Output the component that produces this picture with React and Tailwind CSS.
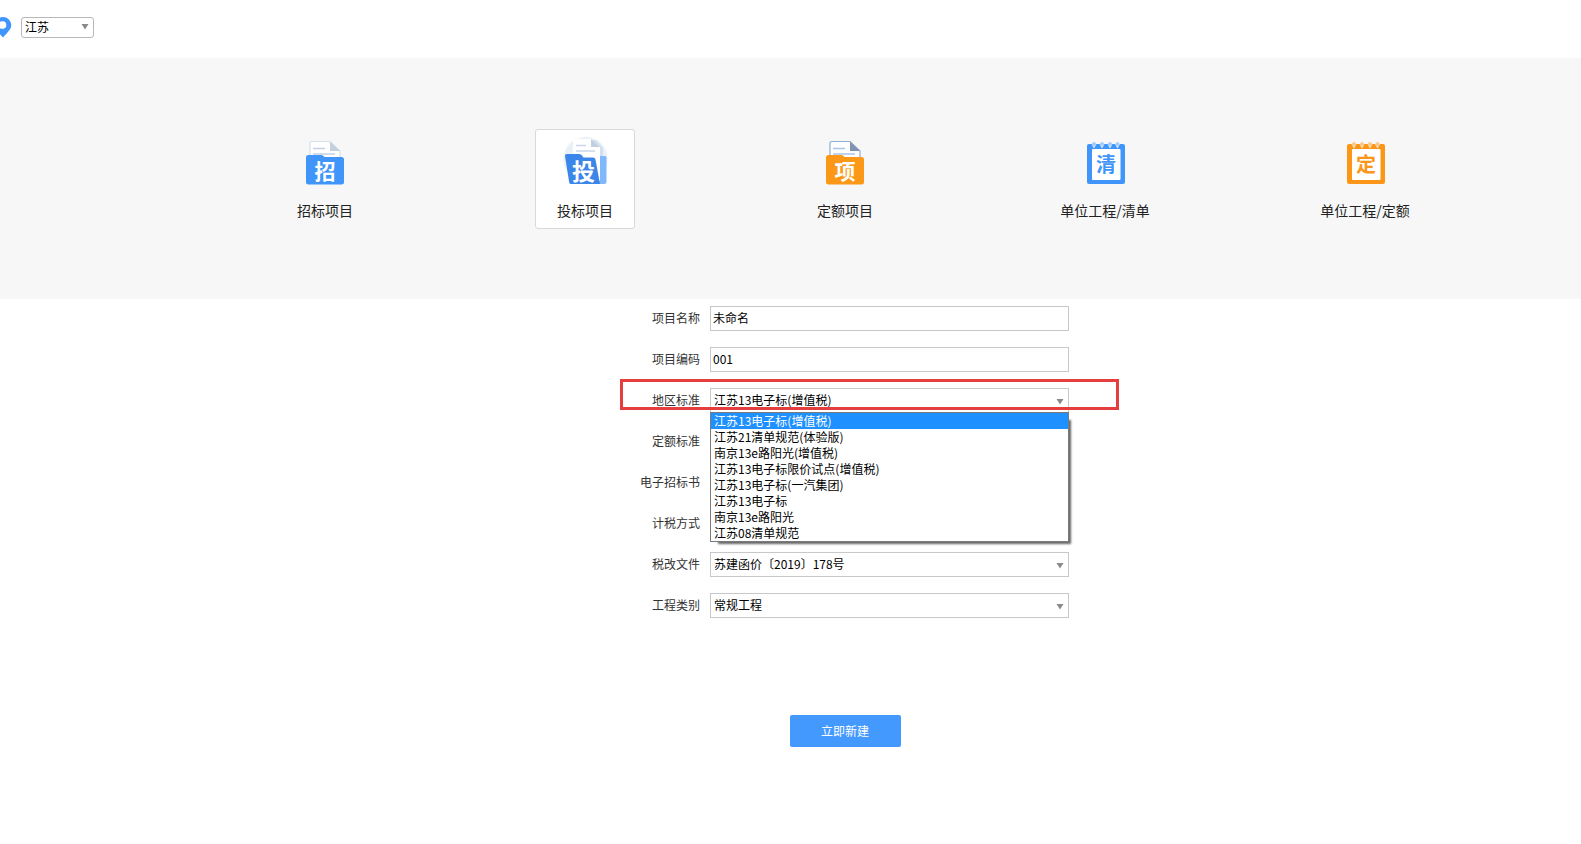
import React, { useState } from 'react';
import clsx from 'clsx';

const tabs = [
    { id: 'zhao', label: '招标项目', icon: <FolderIcon char="招" color="#4095fb" edge="#d5e0ef" fold="#c3d0e0" line="#c5d0e6" /> },
    { id: 'tou', label: '投标项目', icon: <OpenFolderIcon char="投" /> },
    { id: 'xiang', label: '定额项目', icon: <FolderIcon char="项" color="#fc9817" edge="#8fadd0" fold="#8093b0" line="#aac4ec" /> },
    { id: 'qing', label: '单位工程/清单', icon: <NotepadIcon char="清" color="#4095fb" ring="#a9cdfa" /> },
    { id: 'ding', label: '单位工程/定额', icon: <NotepadIcon char="定" color="#fb9619" ring="#fbc98b" /> },
];

const standards = [
    '江苏13电子标(增值税)',
    '江苏21清单规范(体验版)',
    '南京13e路阳光(增值税)',
    '江苏13电子标限价试点(增值税)',
    '江苏13电子标(一汽集团)',
    '江苏13电子标',
    '南京13e路阳光',
    '江苏08清单规范',
];

function IconChar({ x, y, size, fill, children }) {
    return (
        <text x={x} y={y} fontSize={size} fill={fill} fontWeight="700" textAnchor="middle">
            {children}
        </text>
    );
}

function FolderIcon({ char, color, edge, fold, line }) {
    return (
        <svg width="48" height="48" viewBox="0 0 48 48" aria-hidden="true">
            <path d="M9 24V4.5Q9 2.5 11 2.5H29L39 12V24Z" fill="#fff" stroke={edge} strokeWidth="1.2" />
            <path d="M29 2.5L39 12H29Z" fill={fold} />
            <path d="M12 9.5H24M12 15H34" stroke={line} strokeWidth="1.6" />
            <path d="M5 18.5Q5 16 7.5 16H20Q21.5 16 22.5 17L23.5 18H40.5Q43 18 43 20.5V43Q43 45.5 40.5 45.5H7.5Q5 45.5 5 43Z" fill={color} />
            <IconChar x="24" y="40" size="21" fill="#fff">{char}</IconChar>
        </svg>
    );
}

function OpenFolderIcon({ char }) {
    return (
        <svg className="overflow-visible" width="48" height="48" viewBox="0 0 48 48" aria-hidden="true">
            <circle cx="24.5" cy="20" r="22" fill="#e9f0f8" />
            <path d="M5 36H44V48H5Z" fill="#fff" />
            <path d="M12 1H35L42 9V42H12Z" fill="#d3e0ef" />
            <path d="M37 17H44Q45.5 17 45.5 18.5V43Q45.5 45 43.5 45H34Z" fill="#7fb9fb" />
            <path d="M12 1Q12 0 13 0H30L39 8V42H12Z" fill="#fff" />
            <path d="M30 0L39 8H30Z" fill="#c0cfdf" />
            <path d="M15 6.5H25M15 12H34" stroke="#c9d5e9" strokeWidth="1.6" />
            <path d="M4 17Q3.700 15 6 15H18.5Q20 15 21 16.5L22.5 18.5H32Q34 18.500 34.5 20.5L39 45H10Q8.5 45 8.2 43.5Z" fill="#3c86ea" />
            <IconChar x="22.5" y="41" size="23" fill="#fff">{char}</IconChar>
        </svg>
    );
}

function NotepadIcon({ char, color, ring }) {
    return (
        <svg width="48" height="48" viewBox="0 0 48 48" aria-hidden="true">
            <rect x="6" y="5" width="38" height="40" rx="2" fill={color} />
            <rect x="11" y="10" width="28.5" height="31" rx="1" fill="#fff" />
            {[13, 21, 29, 36.5].map(x => (
                <g key={x}>
                    <path d={`M${x - 3} 4H${x + 3}L${x} 9.500Z`} fill="#f7f7f7" />
                    <rect x={x - 2} y="3" width="4" height="4.5" rx="2" fill={ring} />
                </g>
            ))}
            <IconChar x="25" y="33" size="20" fill={color}>{char}</IconChar>
        </svg>
    );
}

function Arrow({ className }) {
    return (
        <svg className={clsx('pointer-events-none absolute', className)} width="8" height="6" viewBox="0 0 8 6" aria-hidden="true">
            <path d="M0.500 0H7.500L4 5.500Z" fill="#8a8a8a" />
        </svg>
    );
}

function Row({ id, label, children }) {
    return (
        <div className="flex items-center justify-end gap-[10px]">
            <label htmlFor={id} className="pb-[2px] text-[#333]">{label}</label>
            <div className="relative w-[359px]">{children}</div>
        </div>
    );
}

function TextRow({ id, label, value }) {
    return (
        <Row id={id} label={label}>
            <input id={id} type="text" defaultValue={value} className="block h-[25px] w-full border border-[#c8c8c8] bg-white px-[2px] pb-[2px]" />
        </Row>
    );
}

function SelectRow({ id, label, options, value, onChange, children }) {
    return (
        <Row id={id} label={label}>
            <select
                id={id}
                value={value}
                onChange={e => onChange?.(e.target.value)}
                className="block h-[25px] w-full appearance-none border border-[#c8c8c8] bg-white px-[3px] pb-[2px]"
            >
                {options.map(option => (
                    <option key={option}>{option}</option>
                ))}
            </select>
            <Arrow className="top-[11px] right-[5px]" />
            {children}
        </Row>
    );
}

export default function App() {
    const [active, setActive] = useState('tou');
    const [standard, setStandard] = useState(standards[0]);

    return (
        <div className="bg-white font-['Noto_Sans_CJK_SC',sans-serif] text-[12px] leading-4 text-black">
            <header className="flex h-[58px] items-start gap-[9px] pt-[17px]">
                <svg width="12" height="21" viewBox="0 0 12 21" aria-hidden="true">
                    <path d="M3 0A8.300 8.300 0 0 1 11.300 8.300C11.300 12.500 6 17 3 20.500C0 17 -5.300 12.500 -5.300 8.300A8.300 8.300 0 0 1 3 0Z" fill="#4095fb" />
                    <circle cx="2.500" cy="8" r="3.800" fill="#fff" />
                </svg>
                <div className="relative">
                    <select aria-label="地区" className="block h-[21px] w-[73px] appearance-none rounded-[3px] border border-[#b8b8b8] bg-white px-[3px] pb-[1px]">
                        <option>江苏</option>
                    </select>
                    <Arrow className="top-[7px] right-[5px]" />
                </div>
            </header>

            <nav className="grid h-[241px] grid-cols-5 justify-items-center bg-[#f7f7f7] pt-[71px] pr-[86px] pl-[195px]">
                {tabs.map(tab => (
                    <button
                        key={tab.id}
                        type="button"
                        onClick={() => setActive(tab.id)}
                        className={clsx(
                            'flex size-[100px] flex-col items-center rounded-[3px] border pt-[9px] text-[14px] leading-5 text-[#222]',
                            active === tab.id ? 'border-[#d9d9d9] bg-white' : 'border-transparent'
                        )}
                    >
                        {tab.icon}
                        <span className="mt-[13px] whitespace-nowrap">{tab.label}</span>
                    </button>
                ))}
            </nav>

            <main className="flex flex-col items-center pt-[7px] pr-[86px] pl-[195px]">
                <form className="flex w-[448px] flex-col gap-4">
                    <TextRow id="name" label="项目名称" value="未命名" />
                    <TextRow id="code" label="项目编码" value="001" />

                    <div className="relative">
                        <SelectRow id="standard" label="地区标准" options={standards} value={standard} onChange={setStandard}>
                            <ul
                                role="listbox"
                                aria-label="地区标准"
                                className="absolute top-[24px] left-0 z-10 w-full border border-[#7a7a7a] bg-white shadow-[5px_5px_2px_-3px_#666]"
                            >
                                {standards.map(item => (
                                    <li
                                        key={item}
                                        role="option"
                                        aria-selected={item === standard}
                                        onClick={() => setStandard(item)}
                                        className={clsx('px-[3px]', item === standard && 'bg-[#1e90ff] text-white')}
                                    >
                                        {item}
                                    </li>
                                ))}
                            </ul>
                        </SelectRow>
                        {/* highlight frame around the row */}
                        <div className="pointer-events-none absolute -top-[9px] -right-[50px] -left-[1px] z-20 h-[31px] border-3 border-[#e53e3e]" />
                    </div>

                    <SelectRow id="quota" label="定额标准" options={['']} value="" />
                    <SelectRow id="tender" label="电子招标书" options={['']} value="" />
                    <SelectRow id="tax" label="计税方式" options={['']} value="" />
                    <SelectRow id="taxDoc" label="税改文件" options={['苏建函价〔2019〕178号']} />
                    <SelectRow id="type" label="工程类别" options={['常规工程']} />
                </form>

                <button type="button" className="mt-[97px] h-8 w-[111px] rounded-[2px] bg-[#4499ff] text-white">
                    立即新建
                </button>
            </main>
        </div>
    );
}
